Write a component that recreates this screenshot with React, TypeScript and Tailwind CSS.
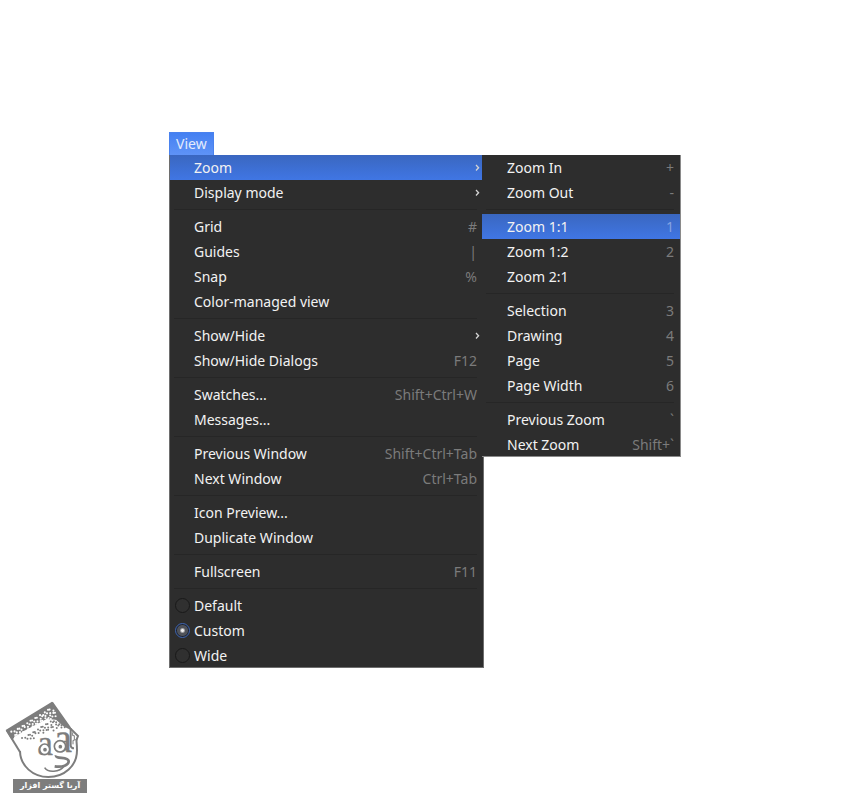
import { useState } from "react";

type Item = { label: string; keys?: string; submenu?: boolean };

const VIEW_GROUPS: Item[][] = [
  [
    { label: "Zoom", submenu: true },
    { label: "Display mode", submenu: true },
  ],
  [
    { label: "Grid", keys: "#" },
    { label: "Guides", keys: "|" },
    { label: "Snap", keys: "%" },
    { label: "Color-managed view" },
  ],
  [
    { label: "Show/Hide", submenu: true },
    { label: "Show/Hide Dialogs", keys: "F12" },
  ],
  [{ label: "Swatches...", keys: "Shift+Ctrl+W" }, { label: "Messages..." }],
  [
    { label: "Previous Window", keys: "Shift+Ctrl+Tab" },
    { label: "Next Window", keys: "Ctrl+Tab" },
  ],
  [{ label: "Icon Preview..." }, { label: "Duplicate Window" }],
  [{ label: "Fullscreen", keys: "F11" }],
];

const ZOOM_GROUPS: Item[][] = [
  [
    { label: "Zoom In", keys: "+" },
    { label: "Zoom Out", keys: "-" },
  ],
  [
    { label: "Zoom 1:1", keys: "1" },
    { label: "Zoom 1:2", keys: "2" },
    { label: "Zoom 2:1" },
  ],
  [
    { label: "Selection", keys: "3" },
    { label: "Drawing", keys: "4" },
    { label: "Page", keys: "5" },
    { label: "Page Width", keys: "6" },
  ],
  [
    { label: "Previous Zoom", keys: "`" },
    { label: "Next Zoom", keys: "Shift+`" },
  ],
];

const LAYOUTS = ["Default", "Custom", "Wide"];

function MenuRow({ item, active, onHover }: { item: Item; active: boolean; onHover: () => void }) {
  return (
    <button
      type="button"
      onMouseEnter={onHover}
      className={`flex h-[25px] w-full items-center justify-between whitespace-nowrap pl-6 text-left ${
        item.submenu ? "pr-[3px]" : "pr-1.5"
      } ${active ? "bg-linear-to-b from-[#3a67c0] to-[#4076e4]" : ""}`}
    >
      <span>{item.label}</span>
      {item.keys && <span className={active ? "text-[#86a3e2]" : "text-[#7b7b7b]"}>{item.keys}</span>}
      {item.submenu && (
        <svg viewBox="0 0 5 8" className="h-2 w-[5px]" fill="none" stroke="#d4d4d4" strokeWidth="1.3">
          <path d="M1 1l2.6 2.7L1 6.5" />
        </svg>
      )}
    </button>
  );
}

function Separator() {
  return <hr className="my-1 ml-1 mr-1.5 h-px border-0 bg-[#262626]" />;
}

function MenuGroups({ groups, initial }: { groups: Item[][]; initial: string }) {
  const [active, setActive] = useState(initial);
  return groups.map((group, i) => (
    <div key={group[0].label}>
      {i > 0 && <Separator />}
      {group.map((item) => (
        <MenuRow
          key={item.label}
          item={item}
          active={item.label === active}
          onHover={() => setActive(item.label)}
        />
      ))}
    </div>
  ));
}

// Halftone rows run parallel to the left brim of the hat.
// Dots are white on the solid brim and grey once they leave it.
const DOTS = Array.from({ length: 9 }, (_, row) =>
  Array.from({ length: 17 }, (_, col) => {
    const n = row * 17 + col;
    const jx = ((n * 37) % 5) - 2;
    const jy = ((n * 53) % 7) - 3;
    const along = col * 9 + (row % 2) * 4;
    return {
      x: 36 + along * 0.85 + row * 4.2 + jx,
      y: 113 - along * 0.52 + row * 7 + jy,
      row,
      n,
    };
  }),
)
  .flat()
  .filter((d) => d.x < 146 + (d.y - 24) * 0.66 && d.y > 36 && d.y < 134 && !(d.x > 106 && d.y > 116))
  .filter((d) => d.row < 6 || (d.n * 29) % 10 > d.row - 4);

function Logo() {
  return (
    <div className="absolute bottom-[7px] left-0 w-[87px]">
      <svg viewBox="0 0 261 252" className="h-[84px] w-[87px] text-[#7d7d7d]" fill="none" stroke="currentColor">
        <path
          d="M156 20L17 105L36 136L46 124L76 106L110 88L140 72L168 74L190 94L214 106Z"
          fill="currentColor"
          stroke="none"
        />
        {DOTS.map((d) => (
          <circle
            key={d.n}
            cx={d.x}
            cy={d.y}
            r={d.row < 4 ? 3.2 : 3}
            stroke="none"
            className={d.row < 4 ? "fill-white" : "fill-[#7d7d7d]"}
          />
        ))}
        <path d="M20 106L60 171" strokeWidth="6" />
        <path d="M60 168C61 213 99 246 145 246C193 246 231 213 231 166C231 153 230 143 229 132" strokeWidth="6" />
        <path d="M156 22L211 100L234 123L229 136" strokeWidth="6" />
        <path d="M212 100V152Q214 160 222 160" strokeWidth="6" />
        <path d="M218 112v10h5v14h-4v12" strokeWidth="3" />
        <text x="112" y="180" fontSize="106" className="fill-[#7d7d7d] font-['Liberation_Serif',serif]" strokeWidth="1">
          a
        </text>
        <text x="162" y="172" fontSize="122" className="fill-[#7d7d7d] font-['Liberation_Serif',serif]" strokeWidth="1">
          a
        </text>
        <ellipse cx="134" cy="163" rx="15" ry="16" fill="white" strokeWidth="5" />
        <ellipse cx="180" cy="154" rx="17" ry="17" fill="white" strokeWidth="5" />
        <circle cx="135" cy="164" r="5.5" fill="currentColor" stroke="none" />
        <circle cx="181" cy="155" r="5.5" fill="currentColor" stroke="none" />
        <path d="M168 181C165 193 204 184 206 198C207 210 187 218 164 214" strokeWidth="8" />
        <path d="M134 218C144 234 178 232 193 213" strokeWidth="5" />
      </svg>
      <div
        lang="fa"
        dir="rtl"
        className="ml-[13px] flex h-3.5 items-center justify-center whitespace-nowrap bg-[#7d7d7d] font-['DejaVu_Sans',sans-serif] text-[8px] font-bold leading-3 text-white"
      >
        آریا گستر افزار
      </div>
    </div>
  );
}

export default function App() {
  const [layout, setLayout] = useState("Custom");

  return (
    <main className="relative flex min-h-screen flex-col items-center justify-center bg-white font-['Noto_Sans',sans-serif] text-[14px] text-[#f2f2f2]">
      <div className="w-full max-w-lg">
        <button
          type="button"
          className="block h-[23px] border border-b-0 border-[#4a82ee] bg-linear-to-b from-[#4480f2] to-[#5f93f6] px-1.5 leading-5 text-[#e4ecfc]"
        >
          View
        </button>
        <div className="flex items-start">
          <div className="min-w-0 flex-1 border-b border-l border-r border-[#6e6e6e] bg-[#2d2d2d]">
            <MenuGroups groups={VIEW_GROUPS} initial="Zoom" />
            <Separator />
            {LAYOUTS.map((name) => (
              <label key={name} className="flex h-[25px] items-center gap-1 pl-[5px] last:h-6">
                <input
                  type="radio"
                  name="layout"
                  checked={layout === name}
                  onChange={() => setLayout(name)}
                  className="size-[15px] appearance-none rounded-full border border-[#191919] bg-[#303030] checked:border-[#3f66b3] checked:bg-[radial-gradient(circle,#f0f0f0_0_1px,#50535a_3px_5px,#1d2330_6px)]"
                />
                {name}
              </label>
            ))}
          </div>
          <div className="-ml-0.5 w-[199px] border-b border-r border-[#8a8a8a] bg-[#2d2d2d] [&_button]:pl-[25px] [&>div:last-child>button:last-child]:h-6">
            <MenuGroups groups={ZOOM_GROUPS} initial="Zoom 1:1" />
          </div>
        </div>
      </div>
      <Logo />
    </main>
  );
}
